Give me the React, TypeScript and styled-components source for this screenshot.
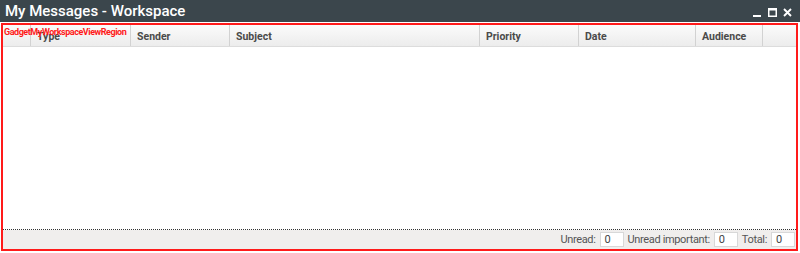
import React from 'react';
import styled, { createGlobalStyle } from 'styled-components';

const GlobalStyle = createGlobalStyle`
	html, body {
		margin: 0;
		padding: 0;
		background: #ffffff;
		font-family: Roboto, 'Liberation Sans', sans-serif;
	}
`;

// widths include the 1px right divider
const columns = [
	{ label: '', width: 28 },
	{ label: 'Type', width: 100 },
	{ label: 'Sender', width: 99 },
	{ label: 'Subject', width: 250 },
	{ label: 'Priority', width: 99 },
	{ label: 'Date', width: 117 },
	{ label: 'Audience', width: 67 },
	{ label: '', width: 0 },
];

const counters = [
	{ label: 'Unread:', value: '0' },
	{ label: 'Unread important:', value: '0' },
	{ label: 'Total:', value: '0' },
];

function App() {
	return (
		<Window>
			<GlobalStyle />
			<TitleBar>
				<Title>My Messages - Workspace</Title>
				<Controls>
					<svg width="9" height="9" viewBox="0 0 9 9">
						<rect x="0" y="7" width="8" height="2" fill="#fff" />
					</svg>
					<svg width="9" height="9" viewBox="0 0 9 9">
						<rect x="0.75" y="0.75" width="7.5" height="7.5" fill="none" stroke="#fff" strokeWidth="1.5" />
						<rect x="0" y="0" width="9" height="2.5" fill="#fff" />
					</svg>
					<svg width="9" height="9" viewBox="0 0 9 9">
						<path d="M1 1 L8 8 M8 1 L1 8" stroke="#fff" strokeWidth="1.9" />
					</svg>
				</Controls>
			</TitleBar>
			<Region>
				<RegionLabel>GadgetMyWorkspaceViewRegion</RegionLabel>
				<HeaderRow>
					{columns.map((c, i) => (
						<HeaderCell key={i} $width={c.width} $last={i === columns.length - 1}>
							{c.label}
						</HeaderCell>
					))}
				</HeaderRow>
				<Body />
				<Footer>
					{counters.map((c) => (
						<Counter key={c.label}>
							<CounterLabel>{c.label}</CounterLabel>
							<CounterBox>{c.value}</CounterBox>
						</Counter>
					))}
				</Footer>
			</Region>
		</Window>
	);
}

const Window = styled.div`
	width: 800px;
	height: 253px;
	display: flex;
	flex-direction: column;
	background: #ffffff;
	overflow: hidden;
`;

const TitleBar = styled.div`
	height: 22px;
	flex: none;
	background: #3b464c;
	display: flex;
	align-items: center;
	justify-content: space-between;
	padding: 0 8px 0 5px;
`;

const Title = styled.div`
	color: #ffffff;
	font-size: 15px;
	font-weight: 500;
	line-height: 22px;
`;

const Controls = styled.div`
	display: flex;
	align-items: center;
	gap: 6px;
	padding-top: 3px;
`;

const Region = styled.div`
	position: relative;
	flex: 1;
	margin: 1px 2px 2px 1px;
	border: 2px solid #ff1a1a;
	display: flex;
	flex-direction: column;
`;

const RegionLabel = styled.div`
	position: absolute;
	top: 2px;
	left: 1px;
	color: #ff1a1a;
	font-size: 9px;
	font-weight: 700;
	letter-spacing: -0.45px;
	line-height: 10px;
	z-index: 2;
`;

const HeaderRow = styled.div`
	height: 21px;
	flex: none;
	display: flex;
	background: linear-gradient(#fbfbfb, #ececec);
	border-bottom: 1px solid #dcdcdc;
`;

const HeaderCell = styled.div<{ $width: number; $last?: boolean }>`
	width: ${(p) => p.$width}px;
	flex: ${(p) => (p.$last ? '1' : 'none')};
	box-sizing: border-box;
	border-right: ${(p) => (p.$last ? 'none' : '1px solid #d2d2d2')};
	padding: 0 6px;
	font-size: 10.5px;
	font-weight: 700;
	color: #4a4a4a;
	line-height: 23px;
	white-space: nowrap;
	overflow: hidden;
`;

const Body = styled.div`
	flex: 1;
	border-bottom: 1px dotted #333;
`;

const Footer = styled.div`
	height: 19px;
	flex: none;
	background: #f0eeed;
	display: flex;
	justify-content: flex-end;
	align-items: center;
	gap: 4px;
	padding: 0 1px 0 0;
`;

const Counter = styled.div`
	display: flex;
	align-items: center;
	gap: 4px;
`;

const CounterLabel = styled.span`
	font-size: 11px;
	letter-spacing: -0.35px;
	color: #555;
`;

const CounterBox = styled.div`
	width: 24px;
	height: 15px;
	box-sizing: border-box;
	background: #fff;
	border: 1px solid #d8d8d8;
	font-size: 11px;
	color: #444;
	line-height: 13px;
	padding-left: 4px;
`;

export default App;
